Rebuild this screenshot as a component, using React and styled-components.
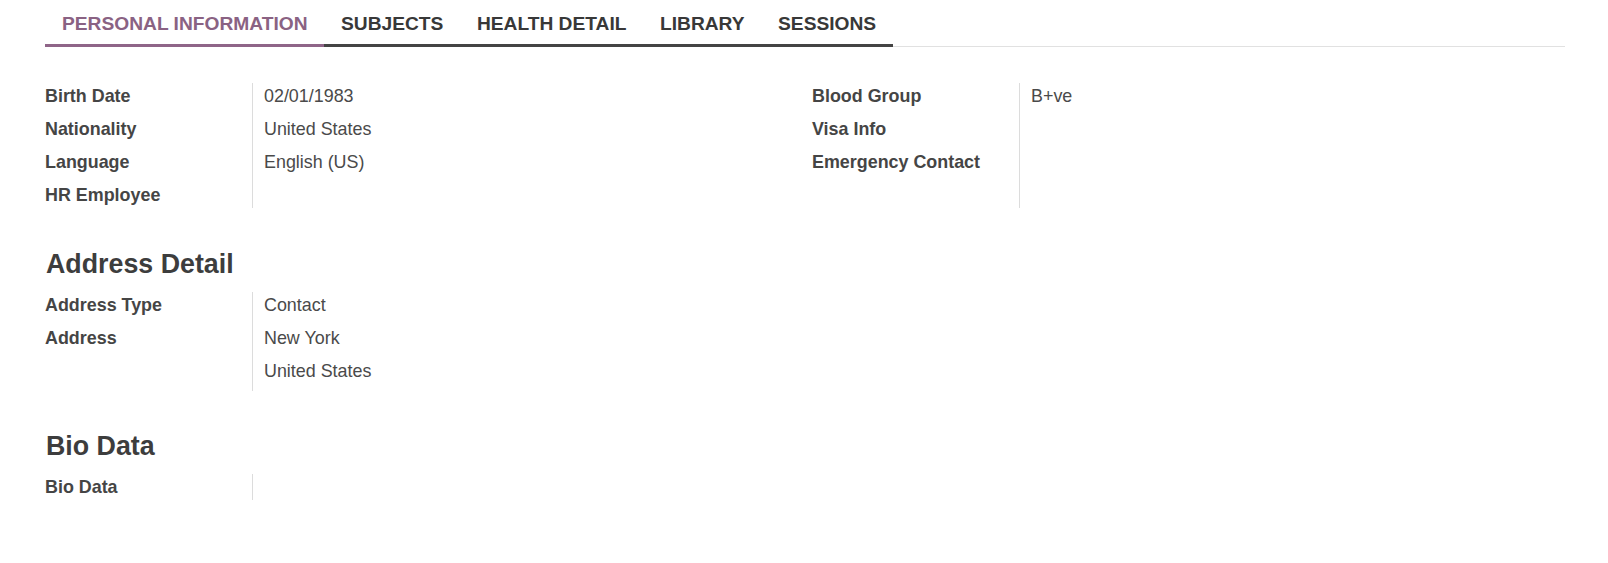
import React from "react";
import styled, { createGlobalStyle } from "styled-components";

const GlobalStyle = createGlobalStyle`
  body {
    margin: 0;
    background: #ffffff;
    font-family: "Liberation Sans", Arial, sans-serif;
    color: #454545;
  }
`;

const Page = styled.div`
  padding: 0 43px 0 45px;
`;

const TabBar = styled.ul`
  display: flex;
  list-style: none;
  margin: 0;
  padding: 0;
  border-bottom: 1px solid #e1e1e1;
`;

const Tab = styled.li`
  margin-top: 12px;
  margin-bottom: -1px;
  padding: 0 16.5px 9px 17px;
  font-size: 19.2px;
  line-height: 23px;
  font-weight: bold;
  text-transform: uppercase;
  color: ${(p) => (p.$active ? "#8a6283" : "#383838")};
  border-bottom: 3px solid ${(p) => (p.$active ? "#8f6588" : "#444444")};
  cursor: pointer;
  white-space: nowrap;
`;

const Columns = styled.div`
  display: grid;
  grid-template-columns: 1fr 1fr;
  column-gap: 14px;
  margin-top: 36px;
`;

const FieldTable = styled.div`
  display: grid;
  grid-template-columns: 207px 1fr;
  align-content: start;
  background: linear-gradient(#dcdcdc, #dcdcdc) 207px 0 / 1px 100% no-repeat;
`;

const Label = styled.div`
  font-size: 17.9px;
  line-height: 26px;
  font-weight: bold;
  color: #454545;
  padding-bottom: ${(p) => (p.$last ? 0 : 7)}px;
  white-space: nowrap;
`;

const Value = styled.div`
  font-size: 17.9px;
  line-height: 26px;
  color: #4a4a4a;
  padding-left: 12px;
  padding-bottom: ${(p) => (p.$last ? 0 : 7)}px;
`;

const ValueLine = styled.div`
  padding-bottom: 7px;
`;

const SectionTitle = styled.h2`
  margin: 39.5px 0 12px;
  padding-left: 1px;
  font-size: 26.8px;
  line-height: 1.2;
  font-weight: bold;
  color: #3d3d3d;
`;

const tabs = ["Personal Information", "Subjects", "Health Detail", "Library", "Sessions"];

const personalLeft = [
  ["Birth Date", "02/01/1983"],
  ["Nationality", "United States"],
  ["Language", "English (US)"],
  ["HR Employee", ""],
];

const personalRight = [
  ["Blood Group", "B+ve"],
  ["Visa Info", ""],
  ["Emergency Contact", ""],
];

const address = [
  ["Address Type", "Contact"],
  ["Address", ["New York", "United States"]],
];

const Fields = ({ rows }) => (
  <FieldTable>
    {rows.map(([label, value], i) => {
      const last = i === rows.length - 1;
      return (
        <React.Fragment key={label}>
          <Label $last={last}>{label}</Label>
          <Value $last={last || Array.isArray(value)}>
            {Array.isArray(value)
              ? value.map((line) => <ValueLine key={line}>{line}</ValueLine>)
              : value}
          </Value>
        </React.Fragment>
      );
    })}
  </FieldTable>
);

export default function App() {
  return (
    <Page>
      <GlobalStyle />
      <TabBar>
        {tabs.map((t, i) => (
          <Tab key={t} $active={i === 0}>
            {t}
          </Tab>
        ))}
      </TabBar>
      <Columns>
        <Fields rows={personalLeft} />
        <Fields rows={personalRight} />
      </Columns>
      <SectionTitle>Address Detail</SectionTitle>
      <Fields rows={address} />
      <SectionTitle>Bio Data</SectionTitle>
      <Fields rows={[["Bio Data", ""]]} />
    </Page>
  );
}
